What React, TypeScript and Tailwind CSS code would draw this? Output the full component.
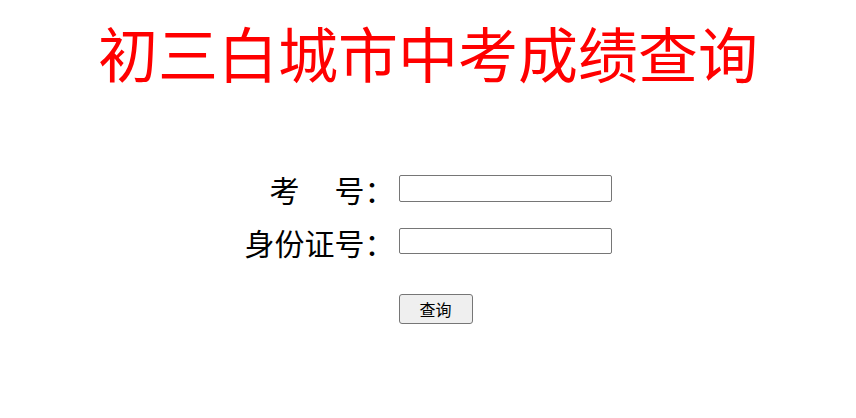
import React from "react";

export default function App() {
  return (
    <div className="min-h-[418px] w-full bg-white font-['Noto_Sans_CJK_SC','Noto_Sans_CJK_JP',sans-serif] text-black">
      <h1 className="pt-[18px] text-center text-[60px] font-normal leading-[68px] text-[#ff0000]">
        初三白城市中考成绩查询
      </h1>
      <div className="mt-[89px] flex justify-center">
        <div className="grid grid-cols-[150px_213px] gap-x-[4px]">
          <div className="flex h-[27px] items-center justify-end text-[30px] leading-none">
            <span>考</span>
            <span className="inline-block w-[35px]"></span>
            <span>号：</span>
          </div>
          <input
            type="text"
            className="h-[27px] w-[213px] rounded-[2px] border border-[#767676] bg-white px-[2px] outline-none"
          />
          <div className="mt-[26px] flex h-[27px] items-center justify-end text-[30px] leading-none">
            身份证号：
          </div>
          <input
            type="text"
            className="mt-[26px] h-[26px] w-[213px] rounded-[2px] border border-[#767676] bg-white px-[2px] outline-none"
          />
          <div></div>
          <div className="mt-[39px]">
            <button
              type="button"
              className="h-[30px] w-[74px] rounded-[3px] border border-[#767676] bg-[#efefef] text-[16px] leading-none text-black"
            >
              查询
            </button>
          </div>
        </div>
      </div>
    </div>
  );
}
